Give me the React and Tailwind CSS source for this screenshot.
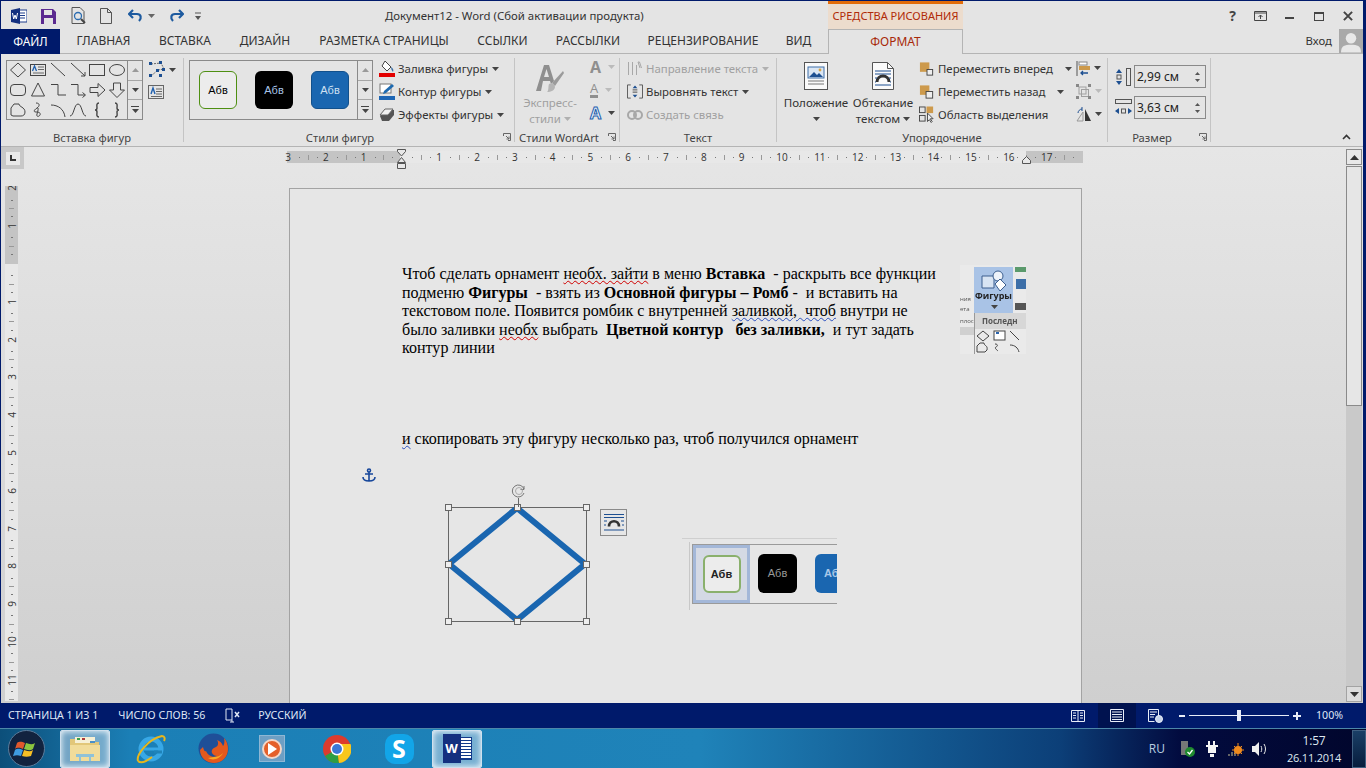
const NAVY = 'bg-[#001a6b]'

function Caret({ className = 'text-[#444]' }) {
  return (
    <svg width="7" height="4" viewBox="0 0 7 4" className={`shrink-0 ${className}`} aria-hidden="true">
      <path d="M0 0h7L3.500 4z" fill="currentColor" />
    </svg>
  )
}

function ShapeIcon({ children }) {
  return (
    <svg width="20" height="20" viewBox="0 0 20 20" fill="none" stroke="#444" strokeWidth="1" aria-hidden="true">
      {children}
    </svg>
  )
}

const gallery = [
  <path d="M10 3l7.500 7-7.500 7-7.500-7z" />,
  <g><rect x="2.500" y="4.500" width="15" height="11" /><path d="M4.500 11l2-5 2 5" stroke="#1f5fae" strokeWidth="1.300" /><path d="M10 7h6M10 9.500h6M5 13h11" stroke="#666" /></g>,
  <path d="M3 3l14 13" />,
  <path d="M3 3l14 13M17 16v-4M17 16h-4" />,
  <rect x="2.500" y="4.500" width="15" height="11" />,
  <ellipse cx="10" cy="10" rx="7.500" ry="5.500" />,
  <rect x="2.500" y="4.500" width="15" height="11" rx="3.500" />,
  <path d="M10 3l6.500 13h-13z" />,
  <path d="M3 4.500h7v10.500h8" />,
  <path d="M3 4.500h7v10.500h7M14.500 12.500l3 2.500-3 2.500" />,
  <path d="M3 7.500h8v-4l7 6.500-7 6.500v-4H3z" />,
  <path d="M6.500 3h7v7h4L10 17.500 2.500 10h4z" />,
  <path d="M3 15V8l3-4h5c0 3 6 3 6 8 0 3-2 4-4 4H5z" />,
  <path d="M8 3c4 0 4 3 1 5s-4 4-1 4 5 1 4 3-4 2-3-1 2-7 0-6" />,
  <path d="M3 5c7 0 13 4 14 12" />,
  <path d="M2 16c4 0 4-12 8-12s4 12 8 12" />,
  <path d="M12 3c-3 0-2 3-2 5s-1 2-2 2c1 0 2 0 2 2s-1 5 2 5" strokeWidth="1.400" />,
  <path d="M8 3c3 0 2 3 2 5s1 2 2 2c-1 0-2 0-2 2s1 5-2 5" strokeWidth="1.400" />,
]

function ScrollColumn({ width = 'w-[15px]' }) {
  return (
    <div className={`${width} border-l border-[#8a8a8a] flex flex-col`}>
      <div className="flex-1 flex items-center justify-center border-b border-[#a6a6a6]">
        <svg width="7" height="4" viewBox="0 0 7 4"><path d="M0 4h7L3.500 0z" fill="#9a9a9a" /></svg>
      </div>
      <div className="flex-1 flex items-center justify-center border-b border-[#a6a6a6]">
        <Caret />
      </div>
      <div className="flex-1 flex flex-col items-center justify-center gap-[2px]">
        <div className="w-[8px] h-px bg-[#444]" />
        <Caret />
      </div>
    </div>
  )
}

function Group({ width, label, pr = '', launcher = false, border = true, children }) {
  return (
    <div className={`relative shrink-0 flex flex-col h-[84px] mt-[4px] ${width} ${border ? 'border-r border-[#c4c4c4]' : ''}`}>
      <div className="h-[74px] flex">{children}</div>
      <div className={`h-[10px] text-center text-[11.2px] leading-[12px] text-[#444] ${pr}`}>{label}</div>
      {launcher && (
        <svg width="8" height="8" viewBox="0 0 8 8" className="absolute right-[3px] bottom-[1px]" fill="none" stroke="#666">
          <path d="M.5 3V.5H7.500V7.500H5M3 3l3 3M6 3.500V6H3.500" />
        </svg>
      )}
    </div>
  )
}

function Swatch({ className, text, textClass }) {
  return (
    <div className={`w-[38px] h-[38px] rounded-[6px] flex items-center justify-center text-[11px] ${className}`}>
      <span className={`font-['Liberation_Sans',sans-serif] ${textClass}`}>{text}</span>
    </div>
  )
}

function RibbonRow({ icon, label, caret = true, muted = false, caretGap = 'ml-[1px]' }) {
  return (
    <div className={`h-[23px] flex items-center gap-[3px] whitespace-nowrap text-[11.4px] ${muted ? 'text-[#a0a0a0]' : 'text-[#333]'}`}>
      <span className="w-[16px] h-[18px] flex items-center justify-center shrink-0">{icon}</span>
      <span>{label}</span>
      {caret && <span className={caretGap}><Caret className={muted ? 'text-[#b0b0b0]' : 'text-[#444]'} /></span>}
    </div>
  )
}

function InsertShapes() {
  return (
    <div className="flex pt-[2px] pl-[5px]">
      <div className="w-[137px] h-[60px] border border-[#8a8a8a] flex">
        <div className="w-[121px] grid grid-cols-6 content-center pl-[1px]">
          {gallery.map((g, i) => <ShapeIcon key={i}>{g}</ShapeIcon>)}
        </div>
        <ScrollColumn />
      </div>
      <div className="ml-[5px] flex flex-col gap-[7px] pt-[1px]">
        <div className="flex items-center gap-[3px]">
          <svg width="18" height="17" viewBox="0 0 18 17" fill="none">
            <path d="M3 3l10-1 3 6-6 1-7 6" stroke="#666" strokeDasharray="2 1" />
            <g fill="#1d4f91"><rect x="1" y="1" width="3" height="3" /><rect x="11" y="0" width="3" height="3" /><rect x="14" y="7" width="3" height="3" /><rect x="8" y="8" width="3" height="3" /><rect x="1" y="13" width="3" height="3" /><rect x="11" y="13" width="3" height="3" /></g>
          </svg>
          <Caret />
        </div>
        <svg width="16" height="14" viewBox="0 0 16 14" fill="none">
          <rect x=".5" y=".5" width="15" height="13" stroke="#666" />
          <path d="M3 9l2-6 2 6" stroke="#1f5fae" strokeWidth="1.400" />
          <path d="M8 4h6M8 6.500h6M8 9h6M3 11.500h11" stroke="#666" />
        </svg>
      </div>
    </div>
  )
}

function ShapeStyles() {
  return (
    <div className="flex pt-[2px] pl-[5px]">
      <div className="w-[184px] h-[60px] border border-[#8a8a8a] flex">
        <div className="w-[169px] flex items-center gap-[18px] pl-[9px]">
          <Swatch className="border border-[#4e8f12] bg-[#ececec]" text="Абв" textClass="text-black" />
          <Swatch className="bg-black" text="Абв" textClass="text-[#a8c4e8]" />
          <Swatch className="bg-[#1a66b0] border border-[#12508c]" text="Абв" textClass="text-[#cfe0f2]" />
        </div>
        <ScrollColumn />
      </div>
      <div className="ml-[6px] flex flex-col -mt-[3px]">
        <RibbonRow
          label="Заливка фигуры"
          icon={
            <svg width="16" height="18" viewBox="0 0 16 18" fill="none">
              <path d="M6 1l6 6-4 4-5-5z" stroke="#444" fill="#fff" />
              <path d="M12 7c2 1 3 3 2 5-1-1-2-3-2-5z" fill="#3a6ea5" />
              <rect x="0" y="13" width="16" height="4" fill="#e30000" />
            </svg>
          }
        />
        <RibbonRow
          label="Контур фигуры"
          icon={
            <svg width="16" height="18" viewBox="0 0 16 18" fill="none">
              <rect x="1" y="1" width="11" height="9" stroke="#777" fill="#fff" />
              <path d="M4 11l1-3 8-7 2 2-8 7z" fill="#1e6ab0" />
              <rect x="0" y="13" width="16" height="4" fill="#1e66b4" />
            </svg>
          }
        />
        <RibbonRow
          label="Эффекты фигуры"
          icon={
            <svg width="16" height="16" viewBox="0 0 16 16">
              <path d="M1 9l5-6h9v5l-5 6H3z" fill="#555" />
              <path d="M1 8l5-6h8L9 8z" fill="#f3f3f3" stroke="#666" />
            </svg>
          }
        />
      </div>
    </div>
  )
}

function WordArt() {
  return (
    <div className="flex pl-[4px]">
      <div className="w-[62px] flex flex-col items-center text-[11.4px] leading-[16px] text-[#a0a0a0]">
        <svg width="28" height="30" viewBox="0 0 28 30" className="mt-[5px] mb-[2px]">
          <path d="M0 28L8 2h5l5 16-3 3-1-3H7l-2 10zM8 14h5L10.500 6z" fill="#8f8f8f" />
          <path d="M27 8L16 20l3 3L28 10z" fill="#9b9b9b" />
          <path d="M13 21c3-2 6 0 6 3s-4 5-8 5c2-1 1-6 2-8z" fill="#b5b5b5" />
        </svg>
        <span>Экспресс-</span>
        <span className="flex items-center gap-[3px]">стили <Caret className="text-[#b0b0b0]" /></span>
      </div>
      <div className="ml-[9px] flex flex-col gap-[5px]">
        <div className="h-[18px] flex items-center gap-[7px]">
          <span className="text-[16px] leading-[16px] font-bold text-[#8f8f8f] font-['Open_Sans',sans-serif]">A</span>
          <Caret className="text-[#bbb]" />
        </div>
        <div className="h-[18px] flex items-center gap-[7px]">
          <span className="text-[13px] leading-[13px] text-[#8f8f8f] border-b-[3px] border-[#8f8f8f] font-['Open_Sans',sans-serif]">A</span>
          <Caret className="text-[#bbb]" />
        </div>
        <div className="h-[18px] flex items-center gap-[7px]">
          <span className="text-[16px] leading-[16px] font-bold text-[#eef3fa] [-webkit-text-stroke:1px_#1f5fae] font-['Open_Sans',sans-serif]">A</span>
          <Caret />
        </div>
      </div>
    </div>
  )
}

function TextGroup() {
  return (
    <div className="flex flex-col pl-[7px] -mt-[1px]">
      <RibbonRow
        muted
        label="Направление текста"
        icon={
          <svg width="16" height="15" viewBox="0 0 16 15" fill="none" stroke="#a8a8a8">
            <path d="M1.500 1v13M5.500 1v13M9.500 4v10M13 7l-2-6h1.500l2 6" />
          </svg>
        }
      />
      <RibbonRow
        label="Выровнять текст"
        icon={
          <svg width="17" height="15" viewBox="0 0 17 15" fill="none">
            <path d="M4 .5H.5v14H4M13 .5h3.500v14H13" stroke="#555" />
            <path d="M8.500 1l2.500 3H6zM8.500 14L6 11h5z" fill="#1d4f91" />
            <path d="M6 7h5M6 5.500h5M6 8.500h5" stroke="#777" />
          </svg>
        }
      />
      <RibbonRow
        muted
        caret={false}
        label="Создать связь"
        icon={
          <svg width="16" height="10" viewBox="0 0 16 10" fill="none" stroke="#a8a8a8" strokeWidth="2">
            <rect x="1" y="1" width="8" height="8" rx="4" />
            <rect x="7" y="1" width="8" height="8" rx="4" />
          </svg>
        }
      />
    </div>
  )
}

function BigButton({ width, icon, top, bottom }) {
  return (
    <div className={`${width} shrink-0 flex flex-col items-center text-[11.6px] leading-[16px] text-[#333] whitespace-nowrap pt-[4px]`}>
      <div className="h-[30px] flex items-start">{icon}</div>
      <span className="mt-[3px]">{top}</span>
      {bottom}
    </div>
  )
}

function ArrangeItem({ back, front }) {
  return (
    <svg width="17" height="16" viewBox="0 0 17 16" fill="none">
      {back}
      {front}
    </svg>
  )
}

function Arrange() {
  return (
    <div className="flex pl-[6px]">
      <BigButton
        width="w-[66px]"
        top="Положение"
        bottom={<span className="h-[16px] flex items-center"><Caret /></span>}
        icon={
          <svg width="24" height="28" viewBox="0 0 24 28" fill="none">
            <rect x=".5" y=".5" width="23" height="27" fill="#fafafa" stroke="#555" />
            <rect x="4" y="5" width="16" height="11" fill="#dbe6f3" stroke="#3f6fa8" />
            <path d="M5 15l5-5 3 3 2-2 4 4z" fill="#1d4f91" />
            <circle cx="16" cy="8" r="1.400" fill="#d9a441" />
            <path d="M4 19h16M4 22h16" stroke="#777" />
          </svg>
        }
      />
      <BigButton
        width="w-[68px]"
        top="Обтекание"
        bottom={<span className="flex items-center gap-[3px]">текстом <Caret /></span>}
        icon={
          <svg width="22" height="28" viewBox="0 0 22 28" fill="none">
            <path d="M.5.500h15l6 6v21H.5z" fill="#fafafa" stroke="#555" />
            <path d="M15.500.500v6h6" stroke="#555" />
            <path d="M3 9h16M3 12h16M3 23h16" stroke="#1d4f91" />
            <path d="M5 20c0-8 12-8 12 0" stroke="#333" strokeWidth="3" />
            <path d="M3 16h2M17 16h2M3 20h1M18 20h1" stroke="#1d4f91" />
          </svg>
        }
      />
      <div className="ml-[2px] w-[157px] shrink-0 flex flex-col -mt-[1px]">
        <RibbonRow
          label="Переместить вперед"
          caretGap="ml-[9px]"
          icon={<ArrangeItem back={<rect x="1" y="1" width="10" height="10" fill="#cd9a4c" />} front={<rect x="8.500" y="8.500" width="6" height="6" fill="#eee" stroke="#444" />} />}
        />
        <RibbonRow
          label="Переместить назад"
          caretGap="ml-[9px]"
          icon={<ArrangeItem back={<rect x="1" y="1" width="10" height="10" fill="#cd9a4c" />} front={<rect x="7.500" y="7.500" width="7" height="7" fill="#eee" stroke="#444" />} />}
        />
        <RibbonRow
          caret={false}
          label="Область выделения"
          icon={
            <svg width="17" height="17" viewBox="0 0 17 17" fill="none">
              <rect x=".5" y=".5" width="6" height="6" stroke="#444" />
              <rect x="8" y="0" width="7" height="7" fill="#cd9a4c" />
              <rect x=".5" y="9.500" width="6" height="6" stroke="#444" />
              <path d="M9 7v9l2-2 2 3 1-1-2-3h3z" fill="#eee" stroke="#444" />
            </svg>
          }
        />
      </div>
      <div className="flex flex-col gap-[5px] mt-[1px]">
        <div className="h-[18px] flex items-center gap-[4px]">
          <svg width="14" height="15" viewBox="0 0 14 15" fill="none">
            <path d="M1 0v15" stroke="#555" />
            <rect x="3" y="1" width="8" height="3" fill="#fff" stroke="#888" />
            <rect x="3" y="5" width="11" height="4" fill="#cd9a4c" />
            <path d="M12 12H5M7 10l-2 2 2 2" stroke="#1d4f91" strokeWidth="1.300" />
          </svg>
          <Caret />
        </div>
        <div className="h-[18px] flex items-center gap-[4px]">
          <svg width="15" height="15" viewBox="0 0 15 15" fill="none" stroke="#a0a0a0">
            <rect x="3" y="3" width="7" height="7" /><rect x="5.500" y="5.500" width="7" height="7" />
            <g fill="#888" stroke="none"><rect width="3" height="3" /><rect x="12" width="3" height="3" /><rect y="12" width="3" height="3" /><rect x="12" y="12" width="3" height="3" /></g>
          </svg>
          <Caret className="text-[#bbb]" />
        </div>
        <div className="h-[18px] flex items-center gap-[4px]">
          <svg width="15" height="15" viewBox="0 0 15 15" fill="none">
            <path d="M7 5L1 14h6z" stroke="#999" />
            <path d="M9 2v12h6z" fill="#333" />
            <path d="M2 6c0-2 2-4 4-4M6 0v4" stroke="#1d4f91" />
          </svg>
          <Caret />
        </div>
      </div>
    </div>
  )
}

function Spin({ value }) {
  return (
    <div className="w-[72px] h-[23px] border border-[#8a8a8a] flex items-center justify-between pl-[2px] pr-[5px] text-[12px] text-[#222]">
      <span>{value}</span>
      <span className="flex flex-col gap-[4px]">
        <svg width="5" height="3" viewBox="0 0 5 3"><path d="M0 3h5L2.500 0z" fill="#555" /></svg>
        <Caret className="text-[#555] w-[5px] h-[3px]" />
      </span>
    </div>
  )
}

function SizeGroup() {
  return (
    <div className="flex flex-col gap-[8px] pl-[7px] pt-[7px]">
      <div className="flex items-center gap-[2px]">
        <svg width="17" height="18" viewBox="0 0 17 18" fill="none">
          <path d="M4 1L1 5h6zM4 17L1 13h6z" fill="#1d4f91" />
          <rect x="2" y="7" width="4" height="4" stroke="#555" />
          <rect x="11.500" y=".5" width="4" height="17" stroke="#555" />
        </svg>
        <Spin value="2,99 см" />
      </div>
      <div className="flex items-center gap-[2px]">
        <svg width="17" height="18" viewBox="0 0 17 18" fill="none">
          <rect x=".5" y=".5" width="16" height="4" stroke="#555" />
          <path d="M0 12l4-3v6zM17 12l-4-3v6z" fill="#1d4f91" />
          <rect x="6.500" y="10" width="4" height="4" stroke="#555" />
        </svg>
        <Spin value="3,63 см" />
      </div>
    </div>
  )
}

function TopBar() {
  return (
    <div className="h-[28px] flex shrink-0">
      <div className="w-[384px] flex items-center pl-[10px] pt-[2px]">
        <svg width="16" height="16" viewBox="0 0 16 16">
          <rect x="7" y="2" width="9" height="12" fill="#fff" stroke="#1a3a8a" />
          <path d="M9 5h5M9 7.500h5M9 10h5" stroke="#1a3a8a" />
          <path d="M0 2l9-2v16l-9-2z" fill="#14307f" />
          <path d="M1.500 5l1.200 6 1.300-4 1.300 4 1.200-6" stroke="#fff" fill="none" strokeWidth="1" />
        </svg>
        <svg width="15" height="15" viewBox="0 0 15 15" className="ml-[14px]">
          <path d="M0 0h12l3 3v12H0z" fill="#5b2a90" />
          <rect x="3" y="1" width="8" height="5" fill="#e4e4e4" />
          <rect x="3" y="9" width="9" height="6" fill="#e4e4e4" />
        </svg>
        <svg width="16" height="18" viewBox="0 0 16 18" fill="none" className="ml-[15px]">
          <path d="M1 .5h8l4 4v12H1z" stroke="#555" />
          <circle cx="7" cy="9" r="3.500" stroke="#2b6cb0" strokeWidth="1.300" />
          <path d="M10 12l4 4" stroke="#444" strokeWidth="2" />
        </svg>
        <svg width="12" height="16" viewBox="0 0 12 16" fill="none" className="ml-[13px]">
          <path d="M.5.500h7l4 4v11H.5zM7.500.500v4h4" stroke="#555" />
        </svg>
        <svg width="16" height="14" viewBox="0 0 16 14" fill="none" className="ml-[16px]">
          <path d="M5 1L1 5l4 4" stroke="#1d5a9f" strokeWidth="2.200" />
          <path d="M1 5h8c4 0 5 4 2 7" stroke="#1d5a9f" strokeWidth="2.200" />
        </svg>
        <Caret className="text-[#666] ml-[4px]" />
        <svg width="16" height="14" viewBox="0 0 16 14" fill="none" className="ml-[13px]">
          <path d="M11 1l4 4-4 4" stroke="#1d5a9f" strokeWidth="2.200" />
          <path d="M15 5H7c-4 0-5 4-2 7" stroke="#1d5a9f" strokeWidth="2.200" />
        </svg>
        <svg width="7" height="8" viewBox="0 0 7 8" className="ml-[11px]">
          <path d="M0 1h6" stroke="#555" />
          <path d="M0 4h6L3 8z" fill="#555" />
        </svg>
      </div>
      <div className="w-[443px] flex items-center text-[11.4px] text-[#333] whitespace-nowrap pt-[2px]">
        Документ12 - Word (Сбой активации продукта)
      </div>
      <div className="w-[135px] border-t-[3px] border-[#e36c09] bg-[#ecdccd] flex items-center justify-center text-[11px] text-[#b02a07] whitespace-nowrap">
        СРЕДСТВА РИСОВАНИЯ
      </div>
      <div className="flex-1 flex items-center justify-end pr-[10px] gap-[18px] pt-[2px]">
        <span className="text-[14px] font-bold text-[#444] leading-none">?</span>
        <svg width="13" height="10" viewBox="0 0 13 10" fill="none" stroke="#444">
          <path d="M.5.500h12v9H.500zM.5 2h12" />
          <path d="M6.500 8V4M4.500 6l2-2 2 2" />
        </svg>
        <div className="w-[9px] h-[2px] bg-[#444] mt-[3px]" />
        <div className="w-[10px] h-[9px] border border-[#444] border-t-2 ml-[2px]" />
        <svg width="10" height="10" viewBox="0 0 11 11" stroke="#444" strokeWidth="2.200" className="ml-[1px]">
          <path d="M1 1l9 9M10 1l-9 9" />
        </svg>
      </div>
    </div>
  )
}

const tabs = [
  ['ГЛАВНАЯ', 'w-[87px]'],
  ['ВСТАВКА', 'w-[76px]'],
  ['ДИЗАЙН', 'w-[84px]'],
  ['РАЗМЕТКА СТРАНИЦЫ', 'w-[154px]'],
  ['ССЫЛКИ', 'w-[83px]'],
  ['РАССЫЛКИ', 'w-[88px]'],
  ['РЕЦЕНЗИРОВАНИЕ', 'w-[142px]'],
  ['ВИД', 'w-[49px] mr-[5px]'],
]

function TabBar() {
  return (
    <div className="h-[25px] flex shrink-0 border-b border-[#b4b4b4] text-[12px] text-[#333] whitespace-nowrap">
      <div className={`w-[59px] -mb-px ${NAVY} text-white flex items-center justify-center`}>ФАЙЛ</div>
      {tabs.map(([t, w]) => (
        <div key={t} className={`${w} flex items-center justify-center`}>{t}</div>
      ))}
      <div className="w-[135px] -mb-px bg-[#e4e4e4] border border-b-0 border-[#b4b4b4] flex items-center justify-center text-[#a8290a]">
        ФОРМАТ
      </div>
      <div className="flex-1 flex items-center justify-end">
        <span className="mr-[7px] text-[11.4px]">Вход</span>
        <div className="w-[24px] h-[24px] bg-[#a9a9a9] flex items-end justify-center overflow-hidden">
          <svg width="20" height="22" viewBox="0 0 21 22" fill="#e8e8e8">
            <circle cx="10.500" cy="7" r="5.500" />
            <path d="M0 22c0-7 4-8 10.500-8S21 15 21 22z" />
          </svg>
        </div>
      </div>
    </div>
  )
}

function Ribbon() {
  return (
    <div className="h-[93px] flex shrink-0 border-b border-[#b4b4b4]">
      <Group width="w-[183px]" label="Вставка фигур"><InsertShapes /></Group>
      <Group width="w-[331px]" label="Стили фигур" pr="pr-[18px]" launcher><ShapeStyles /></Group>
      <Group width="w-[105px]" label="Стили WordArt" pr="pr-[16px]" launcher><WordArt /></Group>
      <Group width="w-[157px]" label="Текст"><TextGroup /></Group>
      <Group width="w-[331px]" label="Упорядочение"><Arrange /></Group>
      <Group width="w-[103px]" label="Размер" pr="pr-[14px]" launcher><SizeGroup /></Group>
      <div className="flex-1 relative">
        <svg width="9" height="6" viewBox="0 0 9 6" fill="none" stroke="#333" strokeWidth="1.600" className="absolute right-[12px] bottom-[6px]">
          <path d="M1 5l3.500-3.500L8 5" />
        </svg>
      </div>
    </div>
  )
}

const hNums = [3, 2, 1, '', 1, 2, 3, 4, 5, 6, 7, 8, 9, 10, 11, 12, 13, 14, 15, 16, 17]

function HRuler() {
  return (
    <div className="relative ml-[286px] w-[796px] h-[12px] mt-[4px] bg-[linear-gradient(to_right,#c4c4c4_0,#c4c4c4_113px,#e8e8e8_113px,#e8e8e8_739px,#c4c4c4_739px)] text-[10px] leading-[12px] text-[#333] font-['Open_Sans',sans-serif]">
      <div className="flex -ml-[2px] w-[798px] overflow-hidden">
        {hNums.map((n, i) => (
          <div key={i} className="w-[37.8px] shrink-0 flex items-center justify-between pr-[5px]">
            <span className="w-[6px] text-center">{n}</span>
            <i className="w-px h-px bg-[#777]" />
            <i className="w-px h-[5px] bg-[#999]" />
            <i className="w-px h-px bg-[#777]" />
          </div>
        ))}
      </div>
      {/* indent markers */}
      <svg width="10" height="20" viewBox="0 0 10 20" fill="#e8e8e8" stroke="#555" className="absolute left-[110px] -top-[2px]">
        <path d="M.5.500h8v2L4.500 7 .5 2.500zM.5 13.500L4.500 8.500l4 5zM.5 14.500h8v5h-8z" />
      </svg>
      <svg width="10" height="8" viewBox="0 0 10 8" fill="#e8e8e8" stroke="#555" className="absolute left-[735px] top-[5px]">
        <path d="M.5 7.500v-3l4-4 4 4v3z" />
      </svg>
    </div>
  )
}

const vNums = [2, 1, '', 1, 2, 3, 4, 5, 6, 7, 8, 9, 10, 11]

function VRuler() {
  return (
    <div className="w-[13px] ml-[4px] h-[515px] overflow-hidden bg-[linear-gradient(to_bottom,#c4c4c4_0,#c4c4c4_78px,#e8e8e8_78px)] text-[10px] leading-[13px] text-[#333] font-['Open_Sans',sans-serif]">
      <div className="flex flex-col -mt-[1.6px]">
        {vNums.map((n, i) => (
          <div key={i} className="h-[37.8px] shrink-0 flex flex-col items-center justify-between pb-[5px]">
            <span className="h-[8px] flex items-center justify-center -rotate-90">{n}</span>
            <i className="h-px w-[2px] bg-[#777]" />
            <i className="h-px w-[5px] bg-[#999]" />
            <i className="h-px w-[2px] bg-[#777]" />
          </div>
        ))}
      </div>
    </div>
  )
}

function Handle({ className }) {
  return <div className={`absolute w-[7px] h-[7px] bg-[#eee] border border-[#666] ${className}`} />
}

function DiamondShape() {
  return (
    <div className="absolute left-[158px] top-[318px] w-[139px] h-[115px] border border-[#666]">
      <svg width="139" height="115" viewBox="0 0 139 115" fill="none" className="absolute -left-px -top-px">
        <path d="M69 1l68 56-68 56L1 57z" stroke="#1a66b0" strokeWidth="6" />
      </svg>
      <Handle className="-left-[4px] -top-[4px]" />
      <Handle className="left-[65px] -top-[4px]" />
      <Handle className="-right-[4px] -top-[4px]" />
      <Handle className="-left-[4px] top-[53px]" />
      <Handle className="-right-[4px] top-[53px]" />
      <Handle className="-left-[4px] -bottom-[4px]" />
      <Handle className="left-[65px] -bottom-[4px]" />
      <Handle className="-right-[4px] -bottom-[4px]" />
      <div className="absolute left-[69px] -top-[10px] w-px h-[9px] bg-[#666]" />
      <svg width="16" height="16" viewBox="0 0 16 16" fill="none" stroke="#777" className="absolute left-[62px] -top-[25px]">
        <path d="M13 10a6 6 0 1 1 0-4M13 3v3.500h-3.500" />
        <circle cx="8" cy="8" r="3.500" stroke="#aaa" />
      </svg>
    </div>
  )
}

function PageObjects() {
  return (
    <>
      {/* picture pasted next to the text */}
      <div className="absolute left-[670px] top-[76px] w-[66px] h-[89px] overflow-hidden bg-[#eaeaea] blur-[0.5px] font-['Open_Sans',sans-serif]">
        <div className="absolute left-[14px] top-[2px] w-[39px] h-[46px] bg-[#a9c3e6]" />
        <svg width="28" height="24" viewBox="0 0 28 24" fill="none" stroke="#3c5f8f" className="absolute left-[20px] top-[4px]">
          <path d="M2 7h12v12H2z" fill="#d8e4f3" />
          <circle cx="18" cy="7" r="5" fill="#eef3fa" />
          <path d="M15 15l5-5 6 6-6 6z" fill="#fff" />
        </svg>
        <div className="absolute left-[15px] top-[26px] text-[9px] leading-[10px] font-bold text-[#222]">Фигуры</div>
        <div className="absolute left-[31px] top-[40px]"><Caret className="text-[#444]" /></div>
        <div className="absolute left-0 top-[30px] text-[6px] leading-[8px] text-[#555]">ния</div>
        <div className="absolute left-0 top-[40px] text-[6px] leading-[8px] text-[#555]">ета</div>
        <div className="absolute left-0 top-[52px] w-[14px] text-[6px] leading-[8px] text-[#555]">плос</div>
        <div className="absolute left-0 top-[62px] w-[14px] h-[8px] bg-[#d0d0d0]" />
        <div className="absolute left-[14px] top-[48px] w-[52px] h-[16px] bg-[#d7d7d7] pl-[8px] text-[8px] leading-[16px] font-bold text-[#555] whitespace-nowrap">Последн</div>
        <div className="absolute left-[14px] top-[48px] w-px h-[41px] bg-[#999]" />
        <svg width="52" height="24" viewBox="0 0 52 24" fill="none" stroke="#444" className="absolute left-[14px] top-[65px]">
          <path d="M9 1l6 5-6 5-6-5z" />
          <rect x="20" y="1" width="11" height="9" fill="#fff" />
          <path d="M22 3h3" stroke="#2a64ad" strokeWidth="2" />
          <path d="M36 1l9 9" />
          <path d="M3 22v-6l3-3h4c0 3 4 2 3 7l-2 2z" />
          <path d="M21 14c3 0 3 2 1 3s1 3 2 4" />
          <path d="M36 15c5 0 8 3 9 7" />
        </svg>
        <div className="absolute left-[55px] top-[2px] w-[11px] h-[5px] bg-[#5b9a6c]" />
        <div className="absolute left-[56px] top-[14px] w-[10px] h-[10px] bg-[#3d6fa8]" />
        <div className="absolute left-[55px] top-[38px] w-[11px] h-[7px] bg-[#555]" />
      </div>

      {/* anchor */}
      <svg width="14" height="15" viewBox="0 0 14 15" fill="none" stroke="#17479b" strokeWidth="1.600" className="absolute left-[72px] top-[279px]">
        <circle cx="7" cy="2.500" r="1.500" />
        <path d="M7 4v9M3 6h8M1 9c0 3 3 4 6 4s6-1 6-4" />
      </svg>

      <DiamondShape />

      {/* layout options button */}
      <div className="absolute left-[310px] top-[320px] w-[27px] h-[27px] border border-[#8a8a8a] flex items-center justify-center">
        <svg width="20" height="20" viewBox="0 0 20 20" fill="none">
          <path d="M0 1.500h20M0 4.500h20M0 17h20" stroke="#1d4f91" />
          <path d="M0 8h3M17 8h3M0 12h2M18 12h2" stroke="#1d4f91" />
          <path d="M5 13.500c0-7 10-7 10 0" stroke="#333" strokeWidth="2.600" />
        </svg>
      </div>

      {/* pasted picture of the styles gallery */}
      <div className="absolute left-[392px] top-[349px] w-[155px] h-[72px] overflow-hidden border-t border-[#cfcfcf]">
        <div className="absolute left-[7px] top-[3px] w-px h-[68px] bg-[#c8c8c8]" />
        <div className="absolute left-[10px] top-[5px] w-[145px] h-[60px] border-y border-l border-[#9a9a9a]">
          <div className="w-[57px] h-[58px] bg-[#d4d9e4] border-[3px] border-[#a3b7d8] flex items-center justify-center">
            <div className="w-[38px] h-[38px] rounded-[6px] border-2 border-[#8ab06c] bg-[#ececec] flex items-center justify-center text-[11px] font-bold text-[#222] font-['Liberation_Sans',sans-serif]">Абв</div>
          </div>
          <div className="absolute left-[65px] top-[9px] w-[39px] h-[39px] rounded-[6px] bg-black flex items-center justify-center text-[11px] text-[#999] font-['Liberation_Sans',sans-serif]">Абв</div>
          <div className="absolute left-[122px] top-[9px] w-[39px] h-[39px] rounded-[6px] bg-[#1a66b0] flex items-center pl-[9px] text-[11px] font-bold text-[#a9c8e8] font-['Liberation_Sans',sans-serif]">Абв</div>
        </div>
      </div>
    </>
  )
}

function Page() {
  const wavyRed = 'underline decoration-wavy decoration-[#d00000] decoration-1'
  const wavyBlue = 'underline decoration-wavy decoration-[#2a4fc0] decoration-1'
  return (
    <div className="absolute left-[288px] top-[41px] w-[793px] h-[600px] bg-[#e6e6e6] border border-[#a3a3a3] pl-[112px] pt-[76px] font-['Liberation_Serif',serif] text-[16.05px] leading-[18.6px] text-black whitespace-pre">
      <div>Чтоб сделать орнамент <span className={wavyRed}>необх. зайти</span> в меню <b>Вставка</b>  - раскрыть все функции</div>
      <div>подменю <b>Фигуры</b>  - взять из <b>Основной фигуры – Ромб</b> -  и вставить на</div>
      <div>текстовом поле. Появится ромбик с внутренней <span className={wavyBlue}>заливкой,  чтоб</span> внутри не</div>
      <div>было заливки <span className={wavyRed}>необх</span> выбрать  <b>Цветной контур   без заливки,</b>  и тут задать</div>
      <div>контур линии</div>
      <div className="mt-[72px]"><span className={wavyBlue}>и</span> скопировать эту фигуру несколько раз, чтоб получился орнамент</div>
      <PageObjects />
    </div>
  )
}

function Workspace() {
  return (
    <div className="flex-1 min-h-0 flex bg-[linear-gradient(to_bottom,#e6e6e6,#cfcfcf)]">
      <div className="relative flex-1 min-w-0 overflow-hidden">
        <HRuler />
        <div className="absolute left-0 top-0 w-[23px] h-[22px] bg-[#c8c8c8] flex items-center justify-center">
          <div className="w-[14px] h-[13px] bg-[#e9e9e9] flex items-center justify-center">
            <div className="w-[6px] h-[6px] border-l-2 border-b-2 border-[#333]" />
          </div>
        </div>
        <div className="mt-[23px]"><VRuler /></div>
        <Page />
      </div>
      <div className="w-[16px] mr-[1px] pt-[2px] pb-[1px] flex flex-col">
        <div className="h-[16px] border border-[#8a8a8a] bg-[#e8e8e8] flex items-center justify-center">
          <svg width="9" height="5" viewBox="0 0 9 5"><path d="M0 5h9L4.500 0z" fill="#333" /></svg>
        </div>
        <div className="flex-1 mt-px flex flex-col bg-[#c9c9c9]">
          <div className="h-[240px] border border-[#8a8a8a] bg-[#e6e6e6]" />
        </div>
        <div className="h-[16px] border border-[#a3a3a3] bg-[#dcdcdc] flex items-center justify-center">
          <svg width="9" height="5" viewBox="0 0 9 5"><path d="M0 0h9L4.500 5z" fill="#333" /></svg>
        </div>
      </div>
    </div>
  )
}

function StatusBar() {
  return (
    <div className={`h-[25px] shrink-0 ${NAVY} flex items-center text-[10.6px] text-[#dfe6f5] whitespace-nowrap pl-[8px]`}>
      <span>СТРАНИЦА 1 ИЗ 1</span>
      <span className="ml-[20px]">ЧИСЛО СЛОВ: 56</span>
      <svg width="15" height="15" viewBox="0 0 15 15" fill="none" stroke="#dfe6f5" className="ml-[20px]">
        <path d="M7 1H1v11h6M7 1v13M5 14h4" />
        <path d="M10 4l4 5M14 4l-4 5" strokeWidth="1.500" />
      </svg>
      <span className="ml-[18px]">РУССКИЙ</span>
      <div className="ml-auto flex items-center h-full">
        <svg width="14" height="13" viewBox="0 0 14 13" fill="none" stroke="#e8edf8" className="mr-[13px]">
          <path d="M.5 1.500H7v11H.5zM7 1.500h6.500v11H7M2 4h3M2 6.500h3M2 9h3M9 4h3M9 6.500h3M9 9h3" />
        </svg>
        <div className="w-[38px] h-full bg-[#00124f] flex items-center justify-center">
          <svg width="14" height="13" viewBox="0 0 14 13" fill="none" stroke="#e8edf8">
            <path d="M.5.500h13v12H.5zM2 3h10M2 5.500h10M2 8h10M2 10.500h10" />
          </svg>
        </div>
        <svg width="15" height="14" viewBox="0 0 15 14" fill="none" stroke="#e8edf8" className="ml-[12px]">
          <path d="M.5.500h10v9M.5.500v12h6M2 3h7M2 5.500h5M2 8h4" />
          <circle cx="11" cy="10" r="3.500" fill="#c5d3ea" />
        </svg>
        <div className="w-[6px] h-[2px] bg-[#e8edf8] ml-[16px]" />
        <div className="relative w-[100px] h-px bg-[#e8edf8] ml-[4px] flex justify-center items-center">
          <div className="w-[4px] h-[11px] bg-[#e8edf8]" />
        </div>
        <span className="relative w-[8px] h-[8px] ml-[4px] flex items-center justify-center">
          <i className="absolute w-[8px] h-[2px] bg-[#e8edf8]" />
          <i className="absolute w-[2px] h-[8px] bg-[#e8edf8]" />
        </span>
        <span className="ml-[15px] mr-[23px]">100%</span>
      </div>
    </div>
  )
}

function TaskButton({ children }) {
  return (
    <div className="w-[50px] h-[38px] shrink-0 rounded-[2px] flex items-center justify-center border border-[#cfe0ee] bg-[#b4cfe2]/60 shadow-[inset_0_0_6px_#fff]">
      {children}
    </div>
  )
}

function TaskIcon({ width, children }) {
  return <div className={`${width} shrink-0 flex items-center justify-center`}>{children}</div>
}

function Taskbar() {
  return (
    <div className="h-[40px] shrink-0 flex items-center border-t border-[#4d87a8] bg-[linear-gradient(to_right,#0c4f7a_0,#1b7fb6_130px,#1f83b9_700px,#0c3f78_1060px,#020b3f_1180px,#01062c_1366px)] text-white">
      <div className="w-[60px] shrink-0 flex items-center pl-[8px]">
        <svg width="37" height="37" viewBox="0 0 37 37">
          <circle cx="18.500" cy="18.500" r="18" fill="#12233f" stroke="#5d7d9c" />
          <path d="M9 13c3-2 5-1 8 0l-2 6c-3-1-5-2-8 0z" fill="#e1582c" />
          <path d="M18 13c3 1 6 2 9 0l-2 6c-3 2-6 1-9 0z" fill="#8cc63f" />
          <path d="M7 20c3-2 5-1 8 0l-2 6c-3-1-5-1-8 0z" fill="#3f9be0" />
          <path d="M16 20c3 1 6 2 9 0l-2 6c-3 1-6 1-9 0z" fill="#f6bf26" />
        </svg>
      </div>
      <TaskButton>
        <svg width="32" height="28" viewBox="0 0 32 28">
          <path d="M1 4h12l2 3h15v19H1z" fill="#e2c779" />
          <rect x="6" y="2" width="20" height="6" fill="#f6f0d5" />
          <rect x="8" y="3" width="3" height="2" fill="#3da04a" />
          <rect x="13" y="3" width="3" height="2" fill="#b03a3a" />
          <rect x="21" y="6" width="5" height="2" fill="#4a90c8" />
          <path d="M1 10h30v16H1z" fill="#f1dc9a" />
          <path d="M7 19h18v3h-3v4h-2v-4H12v4h-2v-4H7z" fill="#8fc2d8" />
        </svg>
      </TaskButton>
      <div className="w-[11px]" />
      <TaskIcon width="w-[60px]">
        <svg width="30" height="32" viewBox="0 0 30 32" fill="none">
          <circle cx="15" cy="16" r="10" stroke="#38a8e6" strokeWidth="5" />
          <path d="M8 16h16" stroke="#38a8e6" strokeWidth="3" />
          <path d="M26 19h-8" stroke="#1f83b9" strokeWidth="3" />
          <path d="M2 28C0 22 12 6 26 3c3 0 3 3 2 5" stroke="#e8b71c" strokeWidth="2" />
          <path d="M2 28c3 3 9 0 14-4" stroke="#e8b71c" strokeWidth="2" />
        </svg>
      </TaskIcon>
      <TaskIcon width="w-[64px]">
        <svg width="31" height="31" viewBox="0 0 31 31">
          <circle cx="15.500" cy="15.500" r="15" fill="#1f4f98" />
          <path d="M2 17C2 24 8 30 16 30c8 0 14-6 14-14 0-4-1-8-4-11 1 4 0 7-1 8-1-3-3-5-6-6 2 3 1 6-1 7-3 1-5 3-4 6 1 2 3 3 5 3-3 2-9 0-11-5-1 1-2 0-3-4z" fill="#e4591d" />
          <path d="M10 25c5 3 12 1 15-5-3 3-6 4-9 4z" fill="#f7a823" />
        </svg>
      </TaskIcon>
      <TaskIcon width="w-[54px]">
        <div className="relative w-[26px] h-[27px] bg-[#6e9fc4] border border-[#8fb7d4] flex items-center justify-center">
          <div className="w-[20px] h-[20px] rounded-full bg-[#e4602a] border-2 border-[#f3d7c8] flex items-center justify-center">
            <svg width="10" height="12" viewBox="0 0 10 12"><path d="M1 0l9 6-9 6z" fill="#fff" /></svg>
          </div>
        </div>
      </TaskIcon>
      <TaskIcon width="w-[76px]">
        <svg width="28" height="28" viewBox="0 0 28 28">
          <circle cx="14" cy="14" r="14" fill="#dc3b2e" />
          <path d="M14 14L2 21A14 14 0 0 0 16 28z" fill="#2f9e44" />
          <path d="M14 14l2 14A14 14 0 0 0 27.500 9H14z" fill="#f8c71c" />
          <circle cx="14" cy="14" r="6.500" fill="#fff" />
          <circle cx="14" cy="14" r="5" fill="#3b78d8" />
        </svg>
      </TaskIcon>
      <TaskIcon width="w-[48px]">
        <div className="w-[29px] h-[30px] rounded-[10px] bg-[#12a5e8] flex items-center justify-center text-[25px] leading-none font-bold text-white font-['Open_Sans',sans-serif]">S</div>
      </TaskIcon>
      <div className="w-[9px]" />
      <TaskButton>
        <div className="relative w-[29px] h-[29px] flex items-center">
          <div className="absolute right-0 top-[3px] w-[20px] h-[23px] border border-[#123a8a] bg-[repeating-linear-gradient(to_bottom,#fff_0,#fff_2px,#123a8a_2px,#123a8a_3px)]" />
          <div className="absolute left-0 top-0 w-[18px] h-[29px] bg-[#14307f] flex items-center justify-center text-[13px] font-bold text-white font-['Open_Sans',sans-serif]">W</div>
        </div>
      </TaskButton>
      <div className="ml-auto flex items-center h-full">
        <span className="text-[12px] text-[#b9cfe0] font-['Open_Sans',sans-serif]">RU</span>
        <svg width="16" height="16" viewBox="0 0 16 16" className="ml-[15px]">
          <rect x="1" y="0" width="7" height="14" fill="#777" />
          <circle cx="10" cy="11" r="5" fill="#1f8a2e" />
          <path d="M7.500 11l2 2 3-4" fill="none" stroke="#fff" strokeWidth="1.300" />
        </svg>
        <svg width="14" height="16" viewBox="0 0 14 16" className="ml-[9px]" fill="#f4f4f4">
          <path d="M3 0h2v4h3V0h2v4h3v2h-2v6H3V6H1V4h2zM5 13h4v3H5z" />
        </svg>
        <svg width="16" height="14" viewBox="0 0 16 14" className="ml-[9px]">
          <path d="M0 12h2v2H0zM3 10h2v4H3zM6 8h2v6H6z" fill="#666" />
          <circle cx="10" cy="8" r="4" fill="#f08a1d" />
          <path d="M10 1v14M4 8h12M6 4l8 8M14 4l-8 8" stroke="#f08a1d" />
        </svg>
        <svg width="15" height="14" viewBox="0 0 15 14" className="ml-[8px]" fill="none">
          <path d="M0 4h3l4-4v14l-4-4H0z" fill="#f0f0f0" />
          <path d="M9 4c1 2 1 4 0 6M12 2c2 3 2 7 0 10" stroke="#e8e8e8" />
        </svg>
        <div className="w-[76px] ml-[9px] flex flex-col items-center text-[11px] leading-[17px] tracking-[-0.2px] text-[#dfe8f0] font-['Open_Sans',sans-serif]">
          <span className="text-[12px]">1:57</span>
          <span>26.11.2014</span>
        </div>
        <div className="w-[14px] h-[38px] border border-[#3f5f80] bg-[linear-gradient(to_bottom,#1a3f66,#071d3d)]" />
      </div>
    </div>
  )
}

export default function App() {
  return (
    <div className="w-[1366px] h-[768px] flex flex-col overflow-hidden bg-[#e4e4e4] font-['Noto_Sans','Open_Sans',sans-serif]">
      <div className="flex-1 min-h-0 flex flex-col border-t border-l border-r-[3px] border-[#001a6b]">
        <TopBar />
        <TabBar />
        <Ribbon />
        <Workspace />
      </div>
      <StatusBar />
      <Taskbar />
    </div>
  )
}
